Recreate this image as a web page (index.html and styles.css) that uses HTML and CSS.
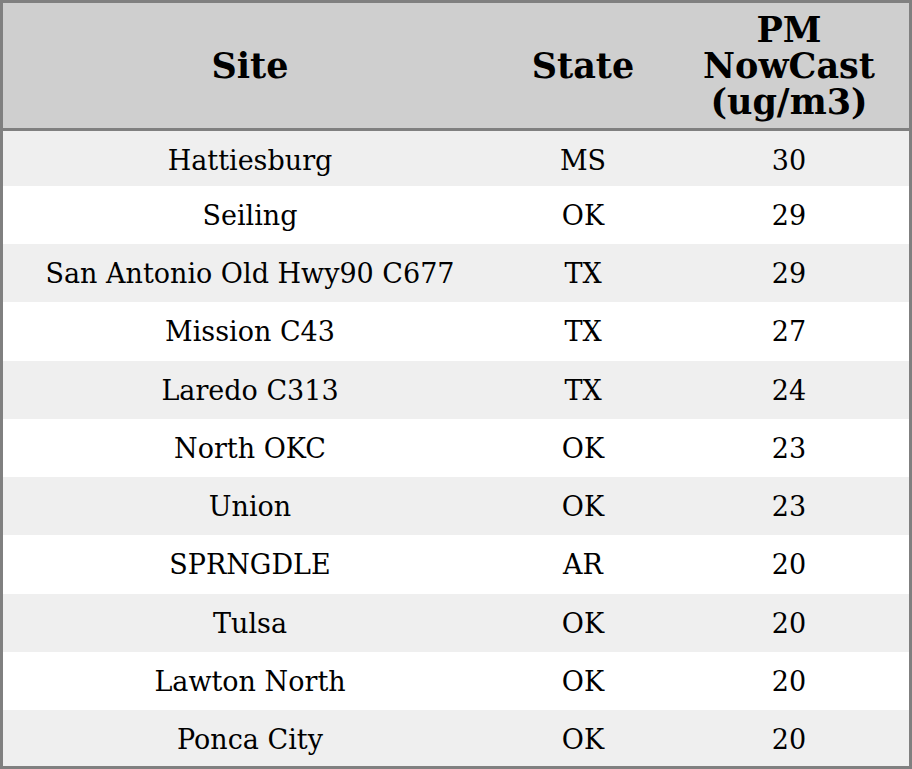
FILE: index.html
```html
<!DOCTYPE html>
<html>
<head>
<meta charset="utf-8">
<link rel="stylesheet" href="styles.css">
</head>
<body>
<table class="aq">
  <thead>
    <tr><th class="c-site">Site</th><th class="c-state">State</th><th class="c-pm">PM NowCast (ug/m3)</th></tr>
  </thead>
  <tbody>
    <tr><td>Hattiesburg</td><td>MS</td><td>30</td></tr>
    <tr><td>Seiling</td><td>OK</td><td>29</td></tr>
    <tr><td>San Antonio Old Hwy90 C677</td><td>TX</td><td>29</td></tr>
    <tr><td>Mission C43</td><td>TX</td><td>27</td></tr>
    <tr><td>Laredo C313</td><td>TX</td><td>24</td></tr>
    <tr><td>North OKC</td><td>OK</td><td>23</td></tr>
    <tr><td>Union</td><td>OK</td><td>23</td></tr>
    <tr><td>SPRNGDLE</td><td>AR</td><td>20</td></tr>
    <tr><td>Tulsa</td><td>OK</td><td>20</td></tr>
    <tr><td>Lawton North</td><td>OK</td><td>20</td></tr>
    <tr><td>Ponca City</td><td>OK</td><td>20</td></tr>
  </tbody>
</table>
</body>
</html>
```
FILE: styles.css
```css
html, body { margin: 0; padding: 0; background: #fff; }
body { font-family: "DejaVu Serif", serif; color: #000; }
.aq {
  width: 912px;
  height: 769px;
  border-collapse: collapse;
  border: 3px solid #808080;
  box-sizing: border-box;
  table-layout: fixed;
}
.aq thead tr { height: 125px; }
.aq th {
  background: #cfcfcf;
  font-size: 35px;
  font-weight: bold;
  line-height: 36px;
  padding: 9px 12px 8px;
  border-bottom: 3px solid #808080;
  text-align: center;
}
.aq tbody tr { height: 58px; }
.aq tbody tr:first-child { height: 56px; }
.aq tbody tr:last-child { height: 57px; }
.aq td {
  font-size: 27px;
  line-height: 31px;
  padding: 14px 12px 0;
  vertical-align: top;
  text-align: center;
}
.aq tbody tr:nth-child(odd) td { background: #efefef; }
.aq tbody tr:nth-child(even) td { background: #fff; }
.c-site { width: 470px; }
.c-state { width: 148px; }
.c-pm { width: 216px; }
```
